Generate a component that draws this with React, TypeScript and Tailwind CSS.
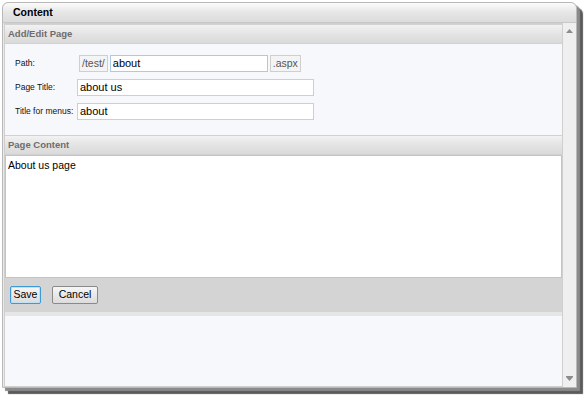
export default function App() {
  return (
    <div className="h-[396px] w-[586px] bg-white pl-[2px] pt-[2px] font-['Liberation_Sans',Arial,sans-serif]">
      <div className="flex h-[386px] w-[575px] flex-col rounded-t-[6px] border border-[#b9b9b9] bg-[#e9e9e9] shadow-[3px_3px_1px_#8a8a8a,6px_6px_1px_#5a5a5a]">
        {/* window title */}
        <div className="flex h-[20px] items-center rounded-t-[6px] border-b border-[#c8c8c8] bg-gradient-to-b from-[#fbfbfb] via-[#e6e6e6] to-[#dcdcdc] pl-[10px] text-[10.5px] font-bold text-black">
          Content
        </div>
        <div className="flex min-h-0 flex-1 pl-[1px]">
          <div className="flex flex-1 flex-col border border-[#cfcfcf] bg-[#f7f8fc]">
            <SectionHeader title="Add/Edit Page" />
            <div className="flex flex-col gap-[7px] pl-[9px] pt-[11px] pb-[15px] text-[8.5px] text-[#111]">
              <div className="flex h-[17px] items-center">
                <span className="w-[65px] whitespace-nowrap pl-[1px]">Path:</span>
                <span className="flex h-[17px] items-center border border-[#cfcfcf] bg-[#f4f4f4] px-[2px] text-[10.5px] text-[#555]">
                  /test/
                </span>
                <span className="ml-[2px] flex h-[17px] w-[158px] items-center border border-[#a9cbe6] bg-white px-[2px] text-[11px] text-black">
                  about
                </span>
                <span className="ml-[2px] flex h-[17px] items-center border border-[#cfcfcf] bg-[#f4f4f4] px-[2px] text-[10.5px] text-[#555]">
                  .aspx
                </span>
              </div>
              <div className="flex h-[17px] items-center">
                <span className="w-[63px] whitespace-nowrap pl-[1px]">Page Title:</span>
                <span className="flex h-[17px] w-[237px] items-center border border-[#cfcfcf] bg-white px-[2px] text-[11px] text-black">
                  about us
                </span>
              </div>
              <div className="flex h-[17px] items-center">
                <span className="w-[63px] whitespace-nowrap pl-[1px]">Title for menus:</span>
                <span className="flex h-[17px] w-[237px] items-center border border-[#cfcfcf] bg-white px-[2px] text-[11px] text-black">
                  about
                </span>
              </div>
            </div>
            <SectionHeader title="Page Content" />
            <div className="h-[123px] border border-[#a9cbe6] bg-white px-[2px] pt-[2px] text-[10.5px] text-black">
              About us page
            </div>
            <div className="flex h-[38px] items-center gap-[11px] border-b-[4px] border-[#e6e6e6] bg-[#d4d4d4] pl-[5px]">
              <button className="h-[18px] w-[31px] rounded-[2px] border border-[#3c9ad6] bg-gradient-to-b from-[#f6f6f6] to-[#dcdcdc] text-[10.5px] text-black shadow-[inset_0_0_0_1px_#bfe0f5]">
                Save
              </button>
              <button className="h-[18px] w-[46px] rounded-[2px] border border-[#8a8a8a] bg-gradient-to-b from-[#f6f6f6] to-[#dcdcdc] text-[10.5px] text-black">
                Cancel
              </button>
            </div>
            <div className="flex-1 bg-[#f7f8fc]" />
          </div>
          {/* scrollbar */}
          <div className="flex w-[13px] flex-col items-center justify-between bg-[#efefef] py-[6px]">
            <svg width="7" height="4" viewBox="0 0 7 4">
              <path d="M0 4 L3.5 0 L7 4 Z" fill="#8c8c8c" />
            </svg>
            <svg width="7" height="5" viewBox="0 0 7 5">
              <path d="M0 0 H7 V1 H0 Z M0 1 L3.5 5 L7 1 Z" fill="#8c8c8c" />
            </svg>
          </div>
        </div>
      </div>
    </div>
  );
}

function SectionHeader({ title }: { title: string }) {
  return (
    <div className="flex h-[20px] items-center border-t border-b border-[#d2d2d2] bg-gradient-to-b from-[#f2f2f2] via-[#e4e4e4] to-[#dadada] pl-[3px] text-[9.5px] font-bold text-[#6d6d6d]">
      {title}
    </div>
  );
}
